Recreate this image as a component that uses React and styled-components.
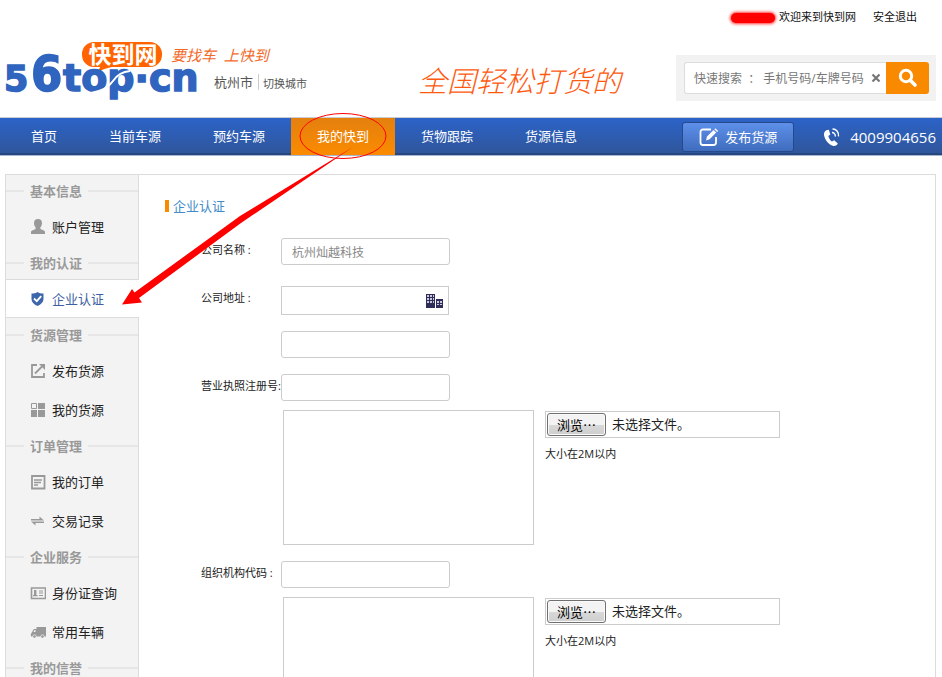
import React, { useRef } from "react";
import styled, { createGlobalStyle, css } from "styled-components";

const GlobalStyle = createGlobalStyle`
  *, *::before, *::after { box-sizing: border-box; }
  body {
    margin: 0;
    background: #fff;
    color: #222;
    font: 13px/20px "Open Sans", "Noto Sans CJK SC", sans-serif;
  }
  a { color: inherit; text-decoration: none; }
  input, button { font-family: inherit; margin: 0; }
`;

const Page = styled.div`
  position: relative;
  height: 100vh;
  overflow: auto;
  scrollbar-width: none;
`;

/* top bar */
const TopBar = styled.div`
  display: flex;
  justify-content: flex-end;
  align-items: center;
  height: 34px;
  padding-right: 25px;
  font-size: 11px;
  color: #111;
`;
const HiddenName = styled.span`
  width: 44px;
  height: 10px;
  margin: 2px 4px 0 0;
  border-radius: 5px;
  background: #f00;
  box-shadow: 0 0 3px 1px #f33;
`;
const LogoutLink = styled.a`
  margin-left: 17px;
`;

/* header */
const Header = styled.header`
  display: flex;
  justify-content: space-between;
  align-items: flex-start;
  height: 83px;
  padding: 0 6px 0 5px;
`;
const Brand = styled.div`
  display: flex;
  flex-direction: column;
  padding-top: 8px;
  white-space: nowrap;
`;
const BrandRow = styled.div`
  display: flex;
  align-items: ${(p) => p.$align || "center"};
`;
const Bubble = styled.svg`
  width: 80px;
  height: 26px;
  margin-left: 77px;
  overflow: visible;
`;
const Tagline = styled.span`
  margin-left: 9px;
  color: #f26a2a;
  font-size: 15px;
  font-style: italic;
  white-space: pre;
`;
const Wordmark = styled.svg`
  width: 198px;
  height: 34px;
  overflow: visible;
`;
const City = styled.span`
  margin: 6px 0 0 11px;
  padding-right: 5px;
  border-right: 1px solid #ccc;
  line-height: 16px;
  color: #555;
`;
const CityLink = styled.a`
  margin: 6px 0 0 4px;
  font-size: 11px;
  color: #555;
`;
const Slogan = styled.p`
  margin: 0;
  padding: 32px 0 0 56px;
  color: #ff5a10;
  font-size: 29px;
  line-height: 30px;
  font-style: italic;
  font-weight: 300;
  white-space: nowrap;
`;
const SearchForm = styled.form`
  display: flex;
  margin-top: 21px;
  padding: 7px 7px 7px 8px;
  background: #f2f2f2;
`;
const SearchField = styled.div`
  display: flex;
  align-items: center;
  width: 202px;
  height: 32px;
  border: 1px solid #ddd;
  border-right: 0;
  border-radius: 3px 0 0 3px;
  background: #fff;
`;
const SearchInput = styled.input`
  flex: 1;
  min-width: 0;
  height: 28px;
  padding: 0 0 0 9px;
  border: 0;
  outline: 0;
  background: none;
  font-size: 12px;
  &::placeholder { color: #777; opacity: 1; }
`;
const ClearButton = styled.button`
  display: flex;
  width: 20px;
  padding: 0 5px;
  border: 0;
  background: none;
`;
const SearchButton = styled.button`
  display: grid;
  place-items: center;
  width: 43px;
  height: 32px;
  padding: 0;
  border: 0;
  border-radius: 0 3px 3px 0;
  background: #f98a00;
`;

/* navigation */
const Nav = styled.nav`
  display: flex;
  height: 39px;
  padding: 0 6px 0 5px;
  border-top: 1px solid #c9ccd2;
  border-bottom: 1px solid #a9b6d0;
  background: linear-gradient(#2b63c8, #30569b 95%, #26467f 96%);
  color: #fff;
  white-space: nowrap;
`;
const NavLink = styled.a`
  padding: 0 26px;
  line-height: 36px;
  ${(p) => p.$active && css`background: linear-gradient(#e4800f, #fb8b00);`}
`;
const NavTools = styled.div`
  display: flex;
  align-items: center;
  margin-left: auto;
`;
const PublishButton = styled.button`
  display: flex;
  align-items: center;
  justify-content: center;
  gap: 6px;
  width: 112px;
  height: 30px;
  border: 1px solid #25498a;
  border-radius: 3px;
  background: linear-gradient(#5e90ea, #3f6cbd);
  color: #fff;
  font-size: 13px;
`;
const Phone = styled.span`
  display: flex;
  align-items: center;
  gap: 9px;
  margin-left: 29px;
  font-size: 15px;
`;

/* body */
const Panel = styled.div`
  display: flex;
  margin: 18px 6px 0 5px;
  border: 1px solid #dcdcdc;
`;
const Sidebar = styled.aside`
  width: 133px;
  flex: none;
  border-right: 1px solid #dcdcdc;
  background: #f3f3f3;
  & > section:first-child > h2 { height: 32px; }
`;
const GroupTitle = styled.h2`
  display: flex;
  align-items: center;
  gap: 6px;
  height: 33px;
  margin: 0;
  color: #999;
  font-size: 13px;
  &::before, &::after {
    content: "";
    height: 2px;
    background: #e6e6e6;
  }
  &::before { width: 18px; }
  &::after { flex: 1; }
`;
const SideLink = styled.a`
  display: flex;
  align-items: center;
  gap: 6px;
  height: 39px;
  padding-left: 24px;
  ${(p) => p.$active && css`
    margin-right: -1px;
    border-top: 1px solid #dcdcdc;
    border-bottom: 1px solid #dcdcdc;
    background: #fff;
    color: #3d5f9f;
  `}
`;
const Content = styled.main`
  flex: 1;
  min-width: 0;
  padding: 21px 26px 40px;
`;
const Heading = styled.h1`
  display: flex;
  align-items: center;
  gap: 4px;
  margin: 0 0 22px;
  color: #428bca;
  font-size: 13px;
  font-weight: 400;
  line-height: 20px;
  &::before {
    content: "";
    width: 4px;
    height: 12px;
    background: #f98a00;
  }
`;
const Row = styled.div`
  display: grid;
  grid-template-columns: 80px 1fr;
  align-items: start;
  margin-left: 36px;
  margin-bottom: ${(p) => (p.$tight ? "9px" : p.$loose ? "21px" : "16px")};
`;
const Label = styled.label`
  font-size: 11px;
  line-height: 24px;
  white-space: nowrap;
`;
const TextInput = styled.input`
  width: 169px;
  height: 27px;
  padding: 0 10px;
  border: 1px solid #ccc;
  border-radius: 3px;
  color: #888;
  font-size: 12px;
`;
const AddressField = styled.div`
  display: flex;
  align-items: center;
  width: 168px;
  height: 29px;
  padding-right: 5px;
  border: 1px solid #ccc;
`;
const AddressInput = styled.input`
  flex: 1;
  min-width: 0;
  height: 25px;
  border: 0;
  outline: 0;
`;
const UploadRow = styled.div`
  display: flex;
  align-items: flex-start;
  gap: 11px;
  margin: 0 0 16px 118px;
`;
const Preview = styled.div`
  width: 251px;
  height: 135px;
  border: 1px solid #ccc;
`;
const Upload = styled.div`
  margin-top: 1px;
`;
const FileBox = styled.div`
  display: flex;
  align-items: center;
  gap: 6px;
  width: 235px;
  height: 27px;
  padding: 1px;
  border: 1px solid #ccc;
`;
const BrowseButton = styled.button`
  width: 59px;
  height: 23px;
  padding: 0;
  border: 1px solid #707070;
  border-radius: 3px;
  background: linear-gradient(#f3f3f3 50%, #d8d8d8 51%, #cfcfcf);
  box-shadow: inset 0 0 0 1px #fafafa;
  color: #000;
  font-size: 13px;
  line-height: 18px;
`;
const FileStatus = styled.span`
  line-height: 18px;
  padding-bottom: 2px;
`;
const Hint = styled.p`
  margin: 6px 0 0;
  font-size: 11px;
`;

/* arrow and ellipse drawn over the page */
const Annotation = styled.svg`
  position: absolute;
  left: 120px;
  top: 110px;
  width: 270px;
  height: 200px;
  pointer-events: none;
`;

const glyphs = {
  user: (
    <path d="M8 0c2.700 0 4 1.600 4 4 0 1.900-.6 3.300-1.600 4.200v1.300c0 .7.6 1 1.700 1.300 1.800.5 2.900 1.100 2.900 2.200v2H1v-2c0-1.100 1.100-1.700 2.900-2.200 1.100-.3 1.700-.6 1.700-1.300V8.200C4.600 7.300 4 5.900 4 4c0-2.400 1.300-4 4-4z" />
  ),
  shield: (
    <>
      <path d="M7.500 1c1.500 1 3.800 1.500 6 1.500V8c0 3-2.400 5.400-6 7-3.600-1.600-6-4-6-7V2.500C3.700 2.500 6 2 7.500 1z" />
      <path d="M4 7.500l2.800 2.700 4.400-5" fill="none" stroke="#fff" strokeWidth="1.800" />
    </>
  ),
  share: (
    <g fill="none" stroke="currentColor" strokeWidth="1.800">
      <path d="M7 2H2v12H14v-4" />
      <path d="M5 10.500L12 3.500" />
      <path d="M9 1h6v6L9 1z" fill="currentColor" stroke="none" />
    </g>
  ),
  blocks: (
    <>
      <path d="M1.500 1.500h5v5h-5z" fill="none" stroke="currentColor" />
      <path d="M8 1h7v6H8zM1 8h6v7H1zM8 8h7v7H8z" />
    </>
  ),
  order: (
    <g fill="none" stroke="currentColor">
      <path d="M2 2h12.500v12.500H2z" strokeWidth="1.800" />
      <path d="M4 6h8M4 8.500h7M4 11h4" strokeWidth="1.400" />
    </g>
  ),
  swap: (
    <path d="M1 6h8.500V3.500L14 7.400H1zM14 10H5.500v2.500L1 8.600h13z" />
  ),
  card: (
    <g fill="none" stroke="currentColor">
      <path d="M1.500 3h14v10.500h-14z" strokeWidth="1.600" />
      <path d="M9 6h4M9 8h4M9 10.500h4M3 10.700h4.500" strokeWidth="1.200" />
      <path d="M5.200 5v5" strokeWidth="2.400" />
    </g>
  ),
  truck: (
    <>
      <path d="M6.500 3H16v9.500H6.500zM6.500 5v7.500H1c-.4-1.500-.2-3.500.8-4L3.800 5z" />
      <circle cx="4.500" cy="12.500" r="1.700" stroke="#f3f3f3" strokeWidth=".7" />
      <circle cx="12.500" cy="12.500" r="1.700" stroke="#f3f3f3" strokeWidth=".7" />
      <path d="M3.500 8l1-2h1v2z" fill="#f3f3f3" />
    </>
  ),
};

const Glyph = styled.svg`
  flex: none;
  width: 16px;
  height: 16px;
  color: ${(p) => (p.$active ? "#3d67ab" : "#999")};
  fill: currentColor;
`;

const groups = [
  { title: "基本信息", items: [["user", "账户管理"]] },
  { title: "我的认证", items: [["shield", "企业认证", true]] },
  { title: "货源管理", items: [["share", "发布货源"], ["blocks", "我的货源"]] },
  { title: "订单管理", items: [["order", "我的订单"], ["swap", "交易记录"]] },
  { title: "企业服务", items: [["card", "身份证查询"], ["truck", "常用车辆"]] },
  { title: "我的信誉", items: [] },
];

const navItems = ["首页", "当前车源", "预约车源", "我的快到", "货物跟踪", "货源信息"];

function FileUpload({ name }) {
  const picker = useRef(null);
  return (
    <UploadRow>
      <Preview />
      <Upload>
        <FileBox>
          <BrowseButton type="button" onClick={() => picker.current.click()}>
            浏览⋯
          </BrowseButton>
          <FileStatus>未选择文件。</FileStatus>
          <input ref={picker} type="file" aria-label={name} hidden />
        </FileBox>
        <Hint>大小在2M以内</Hint>
      </Upload>
    </UploadRow>
  );
}

export default function App() {
  return (
    <Page>
      <GlobalStyle />
      <TopBar>
        <HiddenName />
        <span>欢迎来到快到网</span>
        <LogoutLink href="#logout">安全退出</LogoutLink>
      </TopBar>

      <Header>
        <Brand>
          <BrandRow>
            <Bubble viewBox="0 0 80 26">
              <path d="M12 0h56a12 12 0 0 1 12 12v1a12 12 0 0 1-12 12H30q-6 1-15 5 3-3 3-5h-6A12 12 0 0 1 0 13v-1A12 12 0 0 1 12 0z" fill="#ff6400" />
              <text x="41" y="21" textAnchor="middle" fill="#fff" fontSize="23" fontWeight="700" fontFamily="Noto Sans CJK SC, sans-serif">快到网</text>
            </Bubble>
            <Tagline>要找车  上快到</Tagline>
          </BrandRow>
          <BrandRow $align="flex-start">
            <Wordmark viewBox="0 0 198 34">
              <g fill="#2f64bf" stroke="#2f64bf" strokeWidth="1.500" fontWeight="700" fontFamily="DejaVu Sans, sans-serif">
                <text x="-1" y="23" fontSize="35">5</text>
                <text x="26" y="23" fontSize="50" fontFamily="DejaVu Sans Condensed, DejaVu Sans, sans-serif">6</text>
                <text x="58" y="23" fontSize="38">top·cn</text>
              </g>
              <path d="M86 25q16-3 22-12t17-10" fill="none" stroke="#fff" strokeWidth="2" />
            </Wordmark>
            <City>杭州市</City>
            <CityLink href="#city">切换城市</CityLink>
          </BrandRow>
        </Brand>
        <Slogan>全国轻松打货的</Slogan>
        <SearchForm onSubmit={(e) => e.preventDefault()}>
          <SearchField>
            <SearchInput aria-label="快速搜索" placeholder="快速搜索  ： 手机号码/车牌号码" />
            <ClearButton type="reset" aria-label="清除">
              <svg width="10" height="10" viewBox="0 0 10 10">
                <path d="M1.500 1.500l7 7M8.500 1.500l-7 7" stroke="#777" strokeWidth="2.200" />
              </svg>
            </ClearButton>
          </SearchField>
          <SearchButton aria-label="搜索">
            <svg width="20" height="20" viewBox="0 0 20 20" fill="none" stroke="#fff">
              <circle cx="8" cy="8" r="5.700" strokeWidth="3" />
              <path d="M12.500 12.500l4.500 4.500" strokeWidth="3.600" strokeLinecap="round" />
            </svg>
          </SearchButton>
        </SearchForm>
      </Header>

      <Nav>
        {navItems.map((item) => (
          <NavLink key={item} href="#nav" $active={item === "我的快到"}>{item}</NavLink>
        ))}
        <NavTools>
          <PublishButton type="button">
            <svg width="20" height="20" viewBox="0 0 20 20" fill="none" stroke="#fff">
              <path d="M12 2.500H4A2.500 2.500 0 0 0 1.500 5v10.500A2.500 2.500 0 0 0 4 18h10.500a2.500 2.500 0 0 0 2.500-2.500V10" strokeWidth="1.800" />
              <path d="M7 13.500l1-4L14.500 3l2.700 2.600-6.600 6.600z" fill="#fff" stroke="none" />
              <path d="M15.400 2.200l1-.9 2.700 2.600-1 1z" fill="#fff" stroke="none" />
            </svg>
            发布货源
          </PublishButton>
          <Phone>
            <svg width="18" height="20" viewBox="0 0 18 20" fill="none" stroke="#fff">
              <path d="M3.300 3.200C1 4.500.4 7 1.500 10c1.400 4 4.500 7.600 8.300 8.800 2.200.6 4.300-.4 5-2.300l-3.600-3.300-2.300 1.300C7 13.200 5.800 11.200 5.300 9l2-1.600-1.500-4.700z" fill="#fff" stroke="none" />
              <path d="M9 5.500c2 0 3.500 1.700 3.300 4M9.500 2c3.600-.2 6.500 3.200 6 7.300" strokeWidth="1.400" />
            </svg>
            4009904656
          </Phone>
        </NavTools>
      </Nav>

      <Panel>
        <Sidebar>
          {groups.map((group) => (
            <section key={group.title}>
              <GroupTitle>{group.title}</GroupTitle>
              {group.items.map(([icon, text, active]) => (
                <SideLink key={text} href="#menu" $active={active}>
                  <Glyph viewBox="0 0 16 16" $active={active}>{glyphs[icon]}</Glyph>
                  {text}
                </SideLink>
              ))}
            </section>
          ))}
        </Sidebar>
        <Content>
          <Heading>企业认证</Heading>
          <Row $loose>
            <Label htmlFor="company">公司名称 :</Label>
            <TextInput id="company" defaultValue="杭州灿越科技" />
          </Row>
          <Row>
            <Label htmlFor="region">公司地址 :</Label>
            <AddressField>
              <AddressInput id="region" />
              <svg width="17" height="16" viewBox="0 0 17 16">
                <path d="M0 1h9v14H0zM10 6h7v9h-7z" fill="#2e2c58" />
                <path d="M1 2h2v2H1zM4 2h2v2H4zM7 2h1v2H7zM1 5h2v2H1zM4 5h2v2H4zM7 5h1v2H7zM1 8h2v2H1zM4 8h2v2H4zM7 8h1v2H7zM11 8h2v2h-2zM14 8h2v2h-2zM11 11h2v1h-2zM14 11h2v1h-2z" fill="#c9c8dc" />
              </svg>
            </AddressField>
          </Row>
          <Row>
            <span />
            <TextInput aria-label="详细地址" />
          </Row>
          <Row $tight>
            <Label htmlFor="license">营业执照注册号:</Label>
            <TextInput id="license" />
          </Row>
          <FileUpload name="营业执照" />
          <Row $tight>
            <Label htmlFor="orgcode">组织机构代码 :</Label>
            <TextInput id="orgcode" />
          </Row>
          <FileUpload name="组织机构代码证" />
        </Content>
      </Panel>

      <Annotation viewBox="120 110 270 200">
        <ellipse cx="343" cy="136" rx="43" ry="22.500" fill="none" stroke="#f00" />
        <path d="M353 147L240 216 134.500 292.500 132 289 122 304.500 142 302.500 139 298 241 223z" fill="#f00" />
      </Annotation>
    </Page>
  );
}
